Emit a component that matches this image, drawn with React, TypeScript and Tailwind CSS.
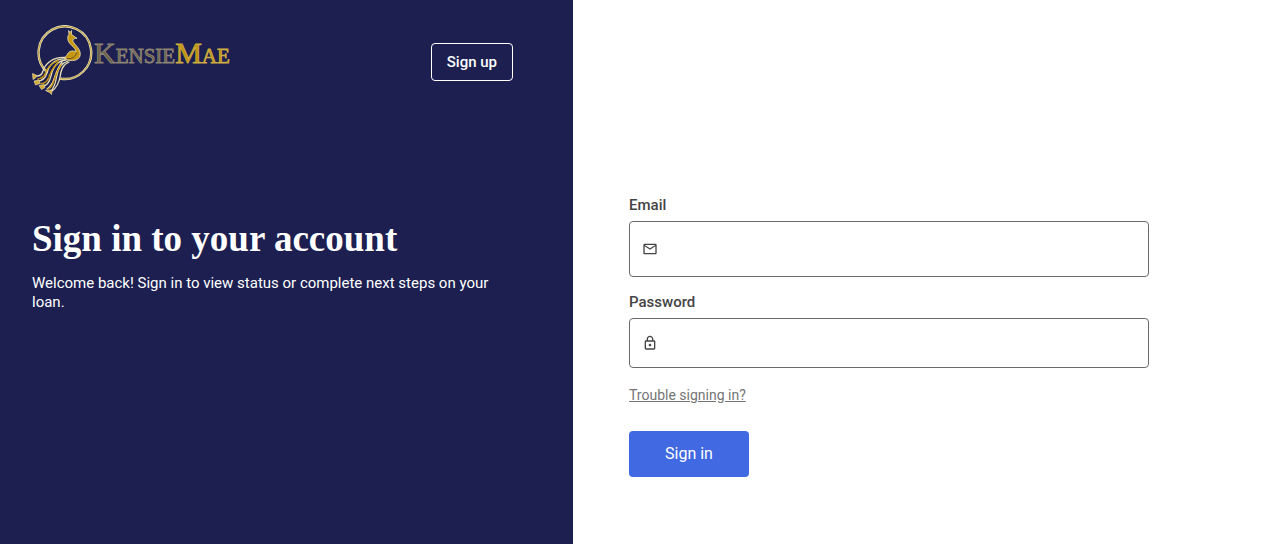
import React, { useState } from 'react';

const Logo: React.FC = () => (
  <svg viewBox="0 0 198 70" className="h-[70px] w-[198px]" role="img" aria-label="KensieMae">
    {/* Ring, open behind the tail */}
    <path d="M15.5 47.4 A26.3 26.3 0 1 1 28 53.5" fill="none" stroke="#e8dfb8" strokeWidth="2.4" />
    <path d="M15.5 47.4 A26.3 26.3 0 1 1 28 53.5" fill="none" stroke="#b8982f" strokeWidth="1" />

    {/* Head, neck and body */}
    <path
      d="M36.6 5.5 L38 7.5 L39.6 5.5 L39.4 9.6 C41.5 10.2 42 11.8 45 13.3 C42.5 13.6 41.5 13.4 40.8 15 C40.4 18.5 48.5 22.5 48.3 29.3 C48 34.5 42.5 36.8 35.5 35 C33.8 34.4 32.8 33.6 32 32.7 C35.5 32.3 34.5 26.5 40 26 C42 25.8 43.6 26.5 44 26.5 C44 22.5 36.2 19.5 35.8 14 C35.6 11.5 36.2 10 37 9.3 Z"
      fill="#c7980f"
      stroke="#ece3bd"
      strokeWidth="0.8"
      strokeLinejoin="round"
    />
    <path d="M35 33.5 C40 34.5 43.5 31.5 45 27.5" fill="none" stroke="#1b1f50" strokeWidth="0.6" />

    {/* Tail feathers */}
    <g fill="none" stroke="#e8dfb8" strokeWidth="1.3" strokeLinecap="round">
      <path d="M33 32.5 C20 32 13 39 11 46 C10 49.5 7 51.5 3 51" />
      <path d="M33 34 C23 33.5 17 40 15 48 C13.5 53 10 56 5 56.5" />
      <path d="M34 35 C25 35.5 21 42 19 51 C17.5 57 15 60.5 11 61" />
      <path d="M36 36 C29 38 26 44 24.5 52 C23.5 59 21.5 63.5 18.5 66.5" />
      <path d="M30 37 C26 42 24 48 22 54 C20.5 59 18 62 15 64" />
      <path d="M37 37 C30 40 29 46 28 52 C27 58 24 63 20 66" />
    </g>
    <g fill="none" stroke="#c7980f" strokeWidth="1.5" strokeLinecap="round" strokeDasharray="3 1.5">
      <path d="M26 35.5 C19 39 15 43 13.5 48 C12 52 9 53.5 6 54" />
      <path d="M26 38 C21 42 19 47 17 52 C15.5 56 13 58.5 9 58.5" />
      <path d="M29 40 C25 46 23 53 21 58 C20 61.5 18 63 16 64" />
    </g>
    <g fill="#d3ac35" stroke="#ece3bd" strokeWidth="0.6">
      <path d="M0.5 48.5 L5 50.5 L3.5 53 L1 54.5 Z" />
      <path d="M2 56 L7 55 L8 58.5 L3.5 60 Z" />
      <path d="M7 60.5 L12 59.5 L13 62.5 L9.5 64.5 Z" />
      <path d="M13.5 65.5 L20 65 L19.5 69.5 L17.5 67.5 Z" />
    </g>

    <text
      x="62"
      y="38"
      fontFamily='"Liberation Serif", serif'
      fontSize="21"
      fill="#6b5f49"
      stroke="#8f8675"
      strokeWidth="0.8"
    >
      <tspan fontSize="30">K</tspan>
      <tspan>ENSIE</tspan>
      <tspan fontSize="30" fill="#c0930c" stroke="#cfae45">M</tspan>
      <tspan fill="#c0930c" stroke="#cfae45">AE</tspan>
    </text>
  </svg>
);

const MailIcon: React.FC = () => (
  <svg viewBox="0 0 24 24" className="size-4 shrink-0 fill-current" aria-hidden="true">
    <path d="M22 6c0-1.100-.9-2-2-2H4c-1.100 0-2 .9-2 2v12c0 1.100.9 2 2 2h16c1.100 0 2-.9 2-2V6zm-2 0-8 5-8-5h16zm0 12H4V8l8 5 8-5v10z" />
  </svg>
);

const LockIcon: React.FC = () => (
  <svg viewBox="0 0 24 24" className="size-4 shrink-0 fill-current" aria-hidden="true">
    <path d="M18 8h-1V6c0-2.760-2.240-5-5-5S7 3.240 7 6v2H6c-1.100 0-2 .9-2 2v10c0 1.100.9 2 2 2h12c1.100 0 2-.9 2-2V10c0-1.100-.9-2-2-2zM9 6c0-1.660 1.340-3 3-3s3 1.340 3 3v2H9V6zm9 14H6V10h12v10zm-6-3c1.100 0 2-.9 2-2s-.9-2-2-2-2 .9-2 2 .9 2 2 2z" />
  </svg>
);

export default function App() {
  const [email, setEmail] = useState('');
  const [password, setPassword] = useState('');

  return (
    <div className="grid min-h-screen grid-cols-[573fr_696fr] bg-white font-['Roboto',sans-serif]">
      {/* Intro panel */}
      <section className="bg-[#1c1f50] pr-[60px] pl-8 pt-[25px] text-white">
        <header className="flex items-center justify-between">
          <Logo />
          <button type="button" className="mt-1 h-[38px] rounded border border-white px-[15px] text-[15px] font-medium">
            Sign up
          </button>
        </header>
        <h1 className="mt-[120px] font-['Liberation_Serif',serif] text-[37px] leading-12 font-bold">
          Sign in to your account
        </h1>
        <p className="mt-[11px] max-w-[465px] text-[15px] leading-[19px]">
          Welcome back! Sign in to view status or complete next steps on your loan.
        </p>
      </section>

      {/* Sign in form */}
      <main className="px-14 pt-[195px]">
        <form className="max-w-[520px] text-[#444444]" onSubmit={(e) => e.preventDefault()}>
          <label htmlFor="email" className="block text-[15px] leading-5 font-medium">
            Email
          </label>
          <div className="mt-[6px] flex h-14 items-center gap-2 rounded border border-[#6b6b6f] px-3">
            <MailIcon />
            <input
              id="email"
              type="email"
              value={email}
              onChange={(e) => setEmail(e.target.value)}
              className="h-full min-w-0 flex-1 bg-transparent text-base outline-none"
            />
          </div>
          <label htmlFor="password" className="mt-[15px] block text-[15px] leading-5 font-medium">
            Password
          </label>
          <div className="mt-[6px] flex h-[50px] items-center gap-2 rounded border border-[#6b6b6f] px-3">
            <LockIcon />
            <input
              id="password"
              type="password"
              value={password}
              onChange={(e) => setPassword(e.target.value)}
              className="h-full min-w-0 flex-1 bg-transparent text-base outline-none"
            />
          </div>
          <a href="#trouble" className="mt-[17px] block w-fit text-sm leading-5 text-[#757575] underline">
            Trouble signing in?
          </a>
          <button type="submit" className="mt-[26px] h-[46px] rounded bg-[#4169e1] px-9 text-base text-white">
            Sign in
          </button>
        </form>
      </main>
    </div>
  );
}
